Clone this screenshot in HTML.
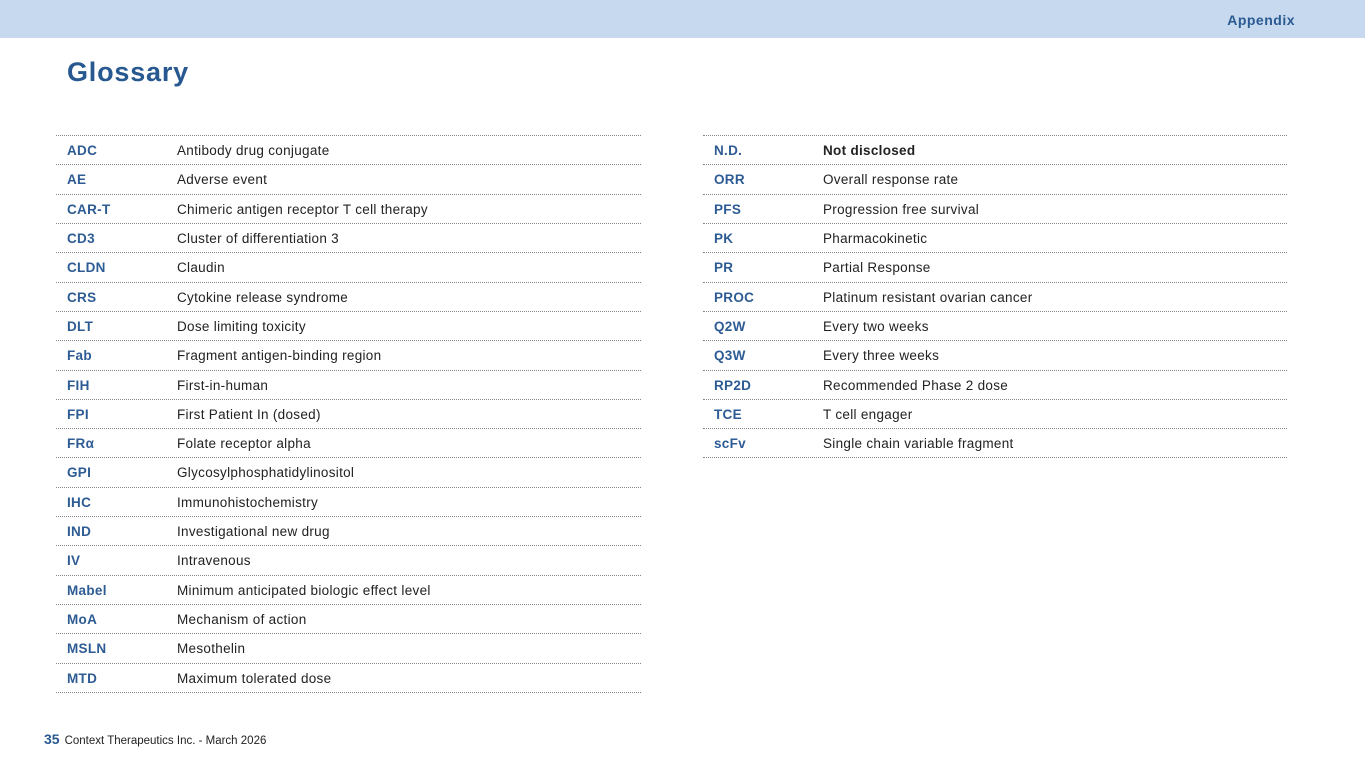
<!DOCTYPE html>
<html><head><meta charset="utf-8"><style>
*{margin:0;padding:0;box-sizing:border-box}
body{width:1365px;height:768px;position:relative;background:#fff;font-family:"Liberation Sans",sans-serif;overflow:hidden}
.hdr{position:absolute;left:0;top:0;width:1365px;height:38px;background:#c7d9ef}
.app{position:absolute;right:70px;top:12px;font-size:14px;font-weight:bold;color:#2b5a91;letter-spacing:0.5px}
h1{position:absolute;left:67px;top:57px;font-size:27px;color:#27588f;font-weight:bold;letter-spacing:0.8px}
.tbl{position:absolute;top:135px;border-top:1px dotted #888}
.row{height:29.32px;border-bottom:1px dotted #888;position:relative;font-size:13.5px;color:#222;letter-spacing:0.3px}
.row b{position:absolute;left:11px;top:7px;color:#2d5b93}
.row span{position:absolute;top:7px}
.L{left:56px;width:585px}.L span{left:121px}
.R{left:703px;width:584px}.R span{left:120px}
.ft{position:absolute;left:44px;top:731px;font-size:11.5px;color:#222}
.ft b{font-size:14px;color:#27588f;margin-right:5px}
</style></head><body>
<div class="hdr"></div><div class="app">Appendix</div>
<h1>Glossary</h1>
<div class="tbl L">
<div class="row"><b>ADC</b><span>Antibody drug conjugate</span></div>
<div class="row"><b>AE</b><span>Adverse event</span></div>
<div class="row"><b>CAR-T</b><span>Chimeric antigen receptor T cell therapy</span></div>
<div class="row"><b>CD3</b><span>Cluster of differentiation 3</span></div>
<div class="row"><b>CLDN</b><span>Claudin</span></div>
<div class="row"><b>CRS</b><span>Cytokine release syndrome</span></div>
<div class="row"><b>DLT</b><span>Dose limiting toxicity</span></div>
<div class="row"><b>Fab</b><span>Fragment antigen-binding region</span></div>
<div class="row"><b>FIH</b><span>First-in-human</span></div>
<div class="row"><b>FPI</b><span>First Patient In (dosed)</span></div>
<div class="row"><b>FRα</b><span>Folate receptor alpha</span></div>
<div class="row"><b>GPI</b><span>Glycosylphosphatidylinositol</span></div>
<div class="row"><b>IHC</b><span>Immunohistochemistry</span></div>
<div class="row"><b>IND</b><span>Investigational new drug</span></div>
<div class="row"><b>IV</b><span>Intravenous</span></div>
<div class="row"><b>Mabel</b><span>Minimum anticipated biologic effect level</span></div>
<div class="row"><b>MoA</b><span>Mechanism of action</span></div>
<div class="row"><b>MSLN</b><span>Mesothelin</span></div>
<div class="row"><b>MTD</b><span>Maximum tolerated dose</span></div>
</div>
<div class="tbl R">
<div class="row"><b>N.D.</b><span style="font-weight:bold">Not disclosed</span></div>
<div class="row"><b>ORR</b><span>Overall response rate</span></div>
<div class="row"><b>PFS</b><span>Progression free survival</span></div>
<div class="row"><b>PK</b><span>Pharmacokinetic</span></div>
<div class="row"><b>PR</b><span>Partial Response</span></div>
<div class="row"><b>PROC</b><span>Platinum resistant ovarian cancer</span></div>
<div class="row"><b>Q2W</b><span>Every two weeks</span></div>
<div class="row"><b>Q3W</b><span>Every three weeks</span></div>
<div class="row"><b>RP2D</b><span>Recommended Phase 2 dose</span></div>
<div class="row"><b>TCE</b><span>T cell engager</span></div>
<div class="row"><b>scFv</b><span>Single chain variable fragment</span></div>
</div>
<div class="ft"><b>35</b>Context Therapeutics Inc. - March 2026</div>
</body></html>
